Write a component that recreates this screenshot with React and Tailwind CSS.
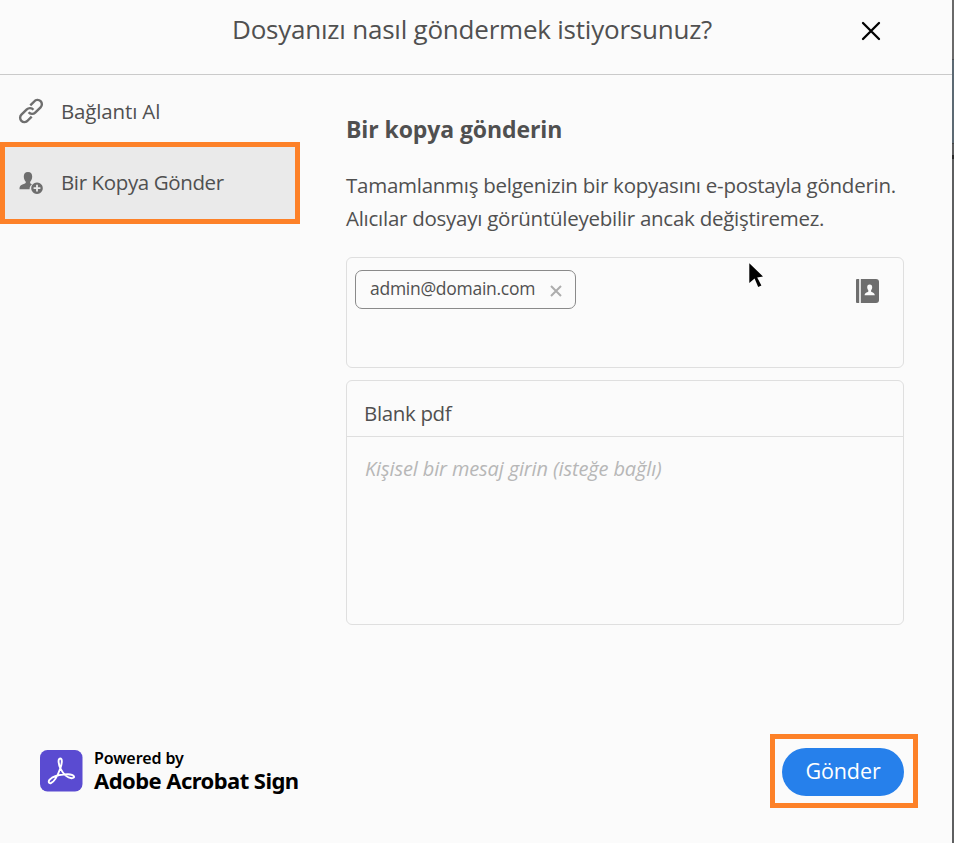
import React from "react";

const LinkIcon = () => (
    <svg width="26" height="26" viewBox="0 0 26 26" fill="none" stroke="#6e6e6e" strokeWidth="2.4">
        <path d="M12.3 7.4 L16.2 3.5 A4.3 4.3 0 0 1 22.6 3.2 A4.3 4.3 0 0 1 22.6 9.3 L17.2 14.6 A4.5 4.5 0 0 1 10.6 14.2" />
        <path d="M13.7 18.6 L9.8 22.5 A4.3 4.3 0 0 1 3.4 22.8 A4.3 4.3 0 0 1 3.4 16.7 L8.8 11.4 A4.5 4.5 0 0 1 15.4 11.8" />
    </svg>
);

const UserAddIcon = () => (
    <svg width="26" height="24" viewBox="0 0 26 24" fill="#6e6e6e">
        <path d="M10 1 C13 1 14.2 3 14.2 5.6 C14.2 8 13.2 9.6 12.4 10.6 C12 11.2 12 12.4 12.8 12.8 L14 13.3 C12.3 14.6 11.5 16.2 11.6 18.2 L1.5 18.2 C1.5 15.5 2 14.4 4.4 13.5 L7 12.6 C8 12.2 8 11.2 7.6 10.6 C6.8 9.6 5.8 8 5.8 5.6 C5.8 3 7 1 10 1 Z" />
        <path
            fillRule="evenodd"
            d="M19 11.4 a5.8 5.8 0 1 0 0.01 0 Z M18.1 13.8 h1.8 v2.5 h2.5 v1.8 h-2.5 v2.5 h-1.8 v-2.5 h-2.5 v-1.8 h2.5 Z"
        />
    </svg>
);

const AddressBookIcon = () => (
    <svg width="24" height="24" viewBox="0 0 24 24">
        <path d="M1 0 H3.2 V24 H1 Q0 24 0 23 V1 Q0 0 1 0 Z" fill="#6e6e6e" />
        <path d="M4.8 0 H20 Q23 0 23 3 V21 Q23 24 20 24 H4.8 Z" fill="#6e6e6e" />
        <path
            d="M13.7 5.5 C15.6 5.5 16.2 6.8 16.2 8.2 C16.2 9.6 15.6 10.6 15.1 11.3 V12.4 C15.1 12.9 18.6 13.4 18.8 16.2 H8.6 C8.8 13.4 12.3 12.9 12.3 12.4 V11.3 C11.8 10.6 11.2 9.6 11.2 8.2 C11.2 6.8 11.8 5.5 13.7 5.5 Z"
            fill="#fbfbfb"
        />
    </svg>
);

const AcrobatLogo = () => (
    <svg width="43" height="42" viewBox="0 0 43 42" className="shrink-0">
        <rect width="42.5" height="41.5" rx="7.5" fill="#5a4bd1" />
        <path
            d="M20.2 8.5 C17.4 8.5 18.8 15 20.4 18.4 C22.6 22.8 27 28 31.6 28.2 C35.6 28.3 34.8 24.3 28 24.2 C21.6 24.2 15.6 25.7 12 27.7 C7.2 30.6 8.4 34 11 33 C14.4 31.6 18.4 23.8 20.6 17.5 C22.2 12.5 22.4 8.5 20.2 8.5 Z"
            fill="none"
            stroke="#fff"
            strokeWidth="1.9"
            strokeLinejoin="round"
        />
    </svg>
);

const App = () => {
    return (
        <div className="relative flex h-[843px] w-[954px] overflow-hidden bg-[#fbfbfb] font-['Open_Sans','Noto_Sans',sans-serif] text-[#505050]">
            <div className="flex flex-1 flex-col">
                {/* Header */}
                <header className="flex h-[75px] shrink-0 items-start border-b border-[#cacaca] pl-[232px]">
                    <h1 className="mt-[10px] w-[629px] whitespace-nowrap text-[26px] leading-[38px] tracking-[-0.22px]">
                        Dosyanızı nasıl göndermek istiyorsunuz?
                    </h1>
                    <button aria-label="Kapat" className="mt-[21px]">
                        <svg width="20" height="20" viewBox="0 0 20 20" stroke="#000" strokeWidth="2.3" strokeLinecap="round">
                            <path d="M2 2 L18 18 M18 2 L2 18" />
                        </svg>
                    </button>
                </header>

                <div className="flex flex-1">
                    {/* Sidebar */}
                    <aside className="flex w-[300px] shrink-0 flex-col bg-[#fafafa]">
                        <button className="flex h-[67px] items-center pb-[1px] pl-[18px] text-left">
                            <span className="mt-[5px] w-[43px]">
                                <LinkIcon />
                            </span>
                            <span className="mt-[6px] whitespace-nowrap text-[20.5px] leading-[30px] tracking-[-0.15px]">
                                Bağlantı Al
                            </span>
                        </button>
                        <button className="flex h-[82px] items-center border-5 border-[#fd8128] bg-[#eaeaea] pl-[13px] text-left">
                            <span className="w-[43px]">
                                <UserAddIcon />
                            </span>
                            <span className="mb-[2px] whitespace-nowrap text-[20.5px] leading-[30px] tracking-[-0.38px]">
                                Bir Kopya Gönder
                            </span>
                        </button>

                        <div className="mt-auto mb-[49px] flex items-center gap-[11px] pl-10 text-black">
                            <AcrobatLogo />
                            <div className="font-['Noto_Sans','Open_Sans',sans-serif] whitespace-nowrap">
                                <p className="text-[16px] leading-[20px] font-semibold tracking-[-0.1px]">Powered by</p>
                                <p className="pb-[2px] text-[22px] leading-[24px] font-bold tracking-[-0.56px]">Adobe Acrobat Sign</p>
                            </div>
                        </div>
                    </aside>

                    {/* Form */}
                    <main className="flex flex-1 flex-col pr-12 pl-[46px]">
                        <h2 className="mt-[37px] text-[23px] leading-[34px] font-bold tracking-[-0.1px]">
                            Bir kopya gönderin
                        </h2>
                        <p className="mt-[23px] text-[20.5px] leading-[33px] tracking-[-0.26px] whitespace-nowrap">
                            Tamamlanmış belgenizin bir kopyasını e-postayla gönderin.
                            <br />
                            Alıcılar dosyayı görüntüleyebilir ancak değiştiremez.
                        </p>

                        {/* Recipients */}
                        <div className="mt-[22px] flex h-[111px] items-start justify-between rounded-[6px] border border-[#dfdfdf] pt-3 pr-[23px] pl-2">
                            <div className="flex h-[39px] w-[221px] items-center rounded-[7px] border border-[#8a8a8a] pl-[14px]">
                                <span className="mb-[3px] w-[180px] whitespace-nowrap text-[17.5px] leading-[28px] tracking-[-0.27px]">
                                    admin@domain.com
                                </span>
                                <svg width="12" height="12" viewBox="0 0 12 12" stroke="#adadad" strokeWidth="2" className="mt-[2px]">
                                    <path d="M1 1 L11 11 M11 1 L1 11" />
                                </svg>
                            </div>
                            <span className="mt-[9px]">
                                <AddressBookIcon />
                            </span>
                        </div>

                        {/* Message */}
                        <div className="mt-3 flex h-[245px] flex-col rounded-[6px] border border-[#dfdfdf]">
                            <div className="flex h-14 items-center border-b border-[#dfdfdf] pt-[9px] pl-[17px] text-[20.5px] leading-[30px] tracking-[-0.35px]">
                                Blank pdf
                            </div>
                            <p className="mt-[17px] pl-[18px] text-[20px] leading-[30px] tracking-[-0.13px] text-[#b7b7b7] italic whitespace-nowrap">
                                Kişisel bir mesaj girin (isteğe bağlı)
                            </p>
                        </div>

                        <div className="mt-auto mr-[-14px] mb-[35px] flex h-[74px] w-[148px] items-center justify-center self-end border-5 border-[#fd8128] pt-[2px] pr-[2px]">
                            <button className="h-12 w-[122px] rounded-full bg-[#2680eb] pb-[1px] text-[21.5px] tracking-[-0.1px] text-white">
                                Gönder
                            </button>
                        </div>
                    </main>
                </div>
            </div>

            {/* Strip of the dimmed page behind the dialog */}
            <div className="flex w-[2px] shrink-0 flex-col bg-[#5e5f60]">
                <div className="h-[59px] bg-[#6a6a6a]" />
                <div className="h-[84px] border-t border-[#4c4f52] bg-[#5c6973]" />
                <div className="h-3 border-t border-[#444444]" />
                <div className="h-1 bg-[#2a2a2a]" />
            </div>

            {/* Mouse pointer */}
            <svg className="absolute top-[263px] left-[749px]" width="15" height="25" viewBox="0 0 15 25">
                <path d="M0.3 0.3 L14 13.6 L8.2 14.4 L12.4 22.4 L9.2 23.9 L5.6 15.6 L0.3 20 Z" fill="#000" />
            </svg>
        </div>
    );
};

export default App;
